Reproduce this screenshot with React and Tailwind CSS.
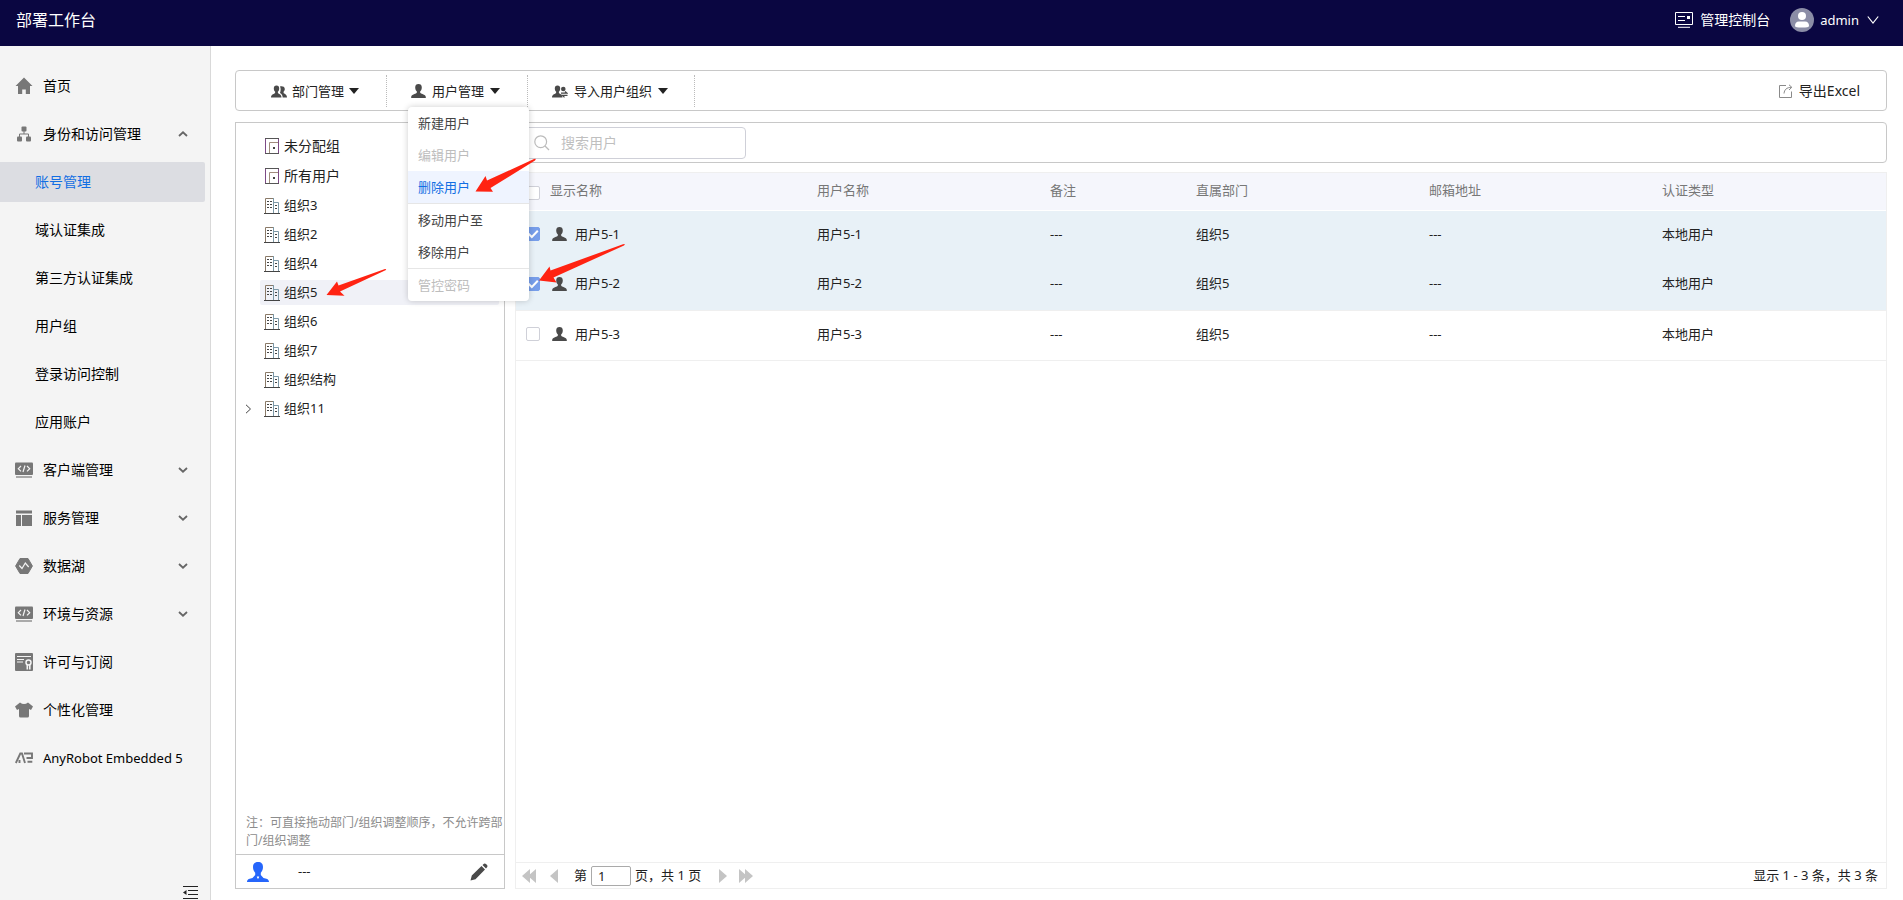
import { useState } from 'react';

const gray = '#777777';

const CodeIcon = () => (
  <svg width="18" height="16" viewBox="0 0 18 16" fill="none">
    <rect x="0" y="0.5" width="18" height="12.5" rx="1" fill={gray} />
    <path d="M6 4L3.3 6.7L6 9.4M12 4L14.7 6.7L12 9.4M10 3.5L8 10" stroke="#f4f4f4" strokeWidth="1.2" />
    <path d="M1 15H17" stroke={gray} strokeWidth="1.2" />
  </svg>
);

const icons = {
  home: (
    <svg width="18" height="18" viewBox="0 0 18 18" fill={gray}>
      <path d="M9 0.5L17.5 9H15V17H10.8V12.5H7.2V17H3V9H0.5Z" />
    </svg>
  ),
  tree: (
    <svg width="18" height="18" viewBox="0 0 18 18" fill={gray}>
      <rect x="6.5" y="1.5" width="5" height="5" rx="1" />
      <rect x="2" y="11.5" width="5" height="5" rx="1" />
      <rect x="11" y="11.5" width="5" height="5" rx="1" />
      <path d="M9 6V9M4.5 12V9H13.5V12" stroke={gray} fill="none" />
    </svg>
  ),
  code: <CodeIcon />,
  layout: (
    <svg width="18" height="18" viewBox="0 0 18 18" fill={gray}>
      <path d="M1 1.5H17V4.5H1ZM1 6H6V17H1ZM7 6H17V17H7Z" />
    </svg>
  ),
  lake: (
    <svg width="18" height="18" viewBox="0 0 18 18">
      <path d="M5 1.5H13L17.4 9L13 16.5H5L0.6 9Z" fill={gray} stroke={gray} strokeLinejoin="round" />
      <path d="M4.3 8.5L7 11.5L10.3 6L13.7 10" stroke="#f4f4f4" strokeWidth="1.2" fill="none" />
    </svg>
  ),
  license: (
    <svg width="18" height="18" viewBox="0 0 18 18" fill="none" stroke="#f4f4f4">
      <rect width="18" height="18" rx="1" fill={gray} stroke="none" />
      <path d="M2 3.5H16M2 6.5H9M2 9H8" />
      <circle cx="13.5" cy="9.5" r="2.5" strokeWidth="1.5" />
      <path d="M12.3 12V16.5M14.8 12V16.5" strokeWidth="1.6" />
    </svg>
  ),
  shirt: (
    <svg width="18" height="16" viewBox="0 0 18 16" fill={gray}>
      <path d="M5 0.5Q9 3.5 13 0.5L18 4.5L16 8L14 7V14Q14 15.5 12.5 15.5H5.5Q4 15.5 4 14V7L2 8L0 4.5Z" />
    </svg>
  ),
  robot: (
    <svg width="18" height="12" viewBox="0 0 18 12" fill="none" stroke={gray} strokeWidth="1.9">
      <path d="M0.8 11L5.3 1.5H7L10 11M9 1.5H17V6H11.5M12.5 9.8H17.3M4.5 8V11" />
    </svg>
  ),
};

const menu = [
  { name: '首页', icon: 'home' },
  { name: '身份和访问管理', icon: 'tree', arrow: 'up' },
  { name: '账号管理', sub: true, active: true },
  { name: '域认证集成', sub: true },
  { name: '第三方认证集成', sub: true },
  { name: '用户组', sub: true },
  { name: '登录访问控制', sub: true },
  { name: '应用账户', sub: true },
  { name: '客户端管理', icon: 'code', arrow: 'down' },
  { name: '服务管理', icon: 'layout', arrow: 'down' },
  { name: '数据湖', icon: 'lake', arrow: 'down' },
  { name: '环境与资源', icon: 'code', arrow: 'down' },
  { name: '许可与订阅', icon: 'license' },
  { name: '个性化管理', icon: 'shirt' },
  { name: 'AnyRobot Embedded 5', icon: 'robot', latin: true },
];

const groups = ['组织3', '组织2', '组织4', '组织5', '组织6', '组织7', '组织结构', '组织11'];

const userActions = [
  { name: '新建用户' },
  { name: '编辑用户', disabled: true },
  { name: '删除用户', active: true },
  { name: '移动用户至', line: true },
  { name: '移除用户' },
  { name: '管控密码', disabled: true, line: true },
];

const users = ['用户5-1', '用户5-2', '用户5-3'];

const Chevron = ({ up }) => (
  <svg width="10" height="6" viewBox="0 0 10 6" fill="none" stroke="#666" strokeWidth="1.8">
    <path d={up ? 'M1 5L5 1.3L9 5' : 'M1 1L5 4.7L9 1'} />
  </svg>
);

const Person = () => (
  <svg width="15" height="14" viewBox="0 0 15 14" fill="#4a4a4a">
    <path d="M7.5 0C9.6 0 10.8 1.2 10.8 3.4C10.8 5.3 10 6.6 9.2 7.3V8.8C9.2 9.7 14.8 10.2 14.8 13V14H0.2V13C0.2 10.2 5.8 9.7 5.8 8.8V7.3C5 6.6 4.2 5.3 4.2 3.4C4.2 1.2 5.4 0 7.5 0Z" />
  </svg>
);

const People = ({ sync }) => (
  <svg width="16" height="13" viewBox="0 0 16 13" fill="#4a4a4a">
    <path d="M5.5 0.5C7.4 0.5 8.2 1.6 8.2 3.4C8.2 5 7.6 6 6.9 6.6V8C7.2 8.9 10.5 9 10.5 12.5H0C0 9 3.8 8.9 4.1 8V6.6C3.4 6 2.8 5 2.8 3.4C2.8 1.6 3.6 0.5 5.5 0.5Z" />
    {sync ? (
      <>
        <circle cx="11.3" cy="4" r="2.3" />
        <path d="M9 8.2H15L13 6.4M15.5 10.4H10.5L12.5 12.4" stroke="#4a4a4a" strokeWidth="1.3" fill="none" />
      </>
    ) : (
      <path d="M9 1.6C9.6 0.9 13.8 0.7 13.8 4C13.8 5.5 13 6.3 12.6 6.8V8C12.8 8.8 16 9 16 12.5H11.7C11.6 10 10.6 9 9 8C9.8 6 10 3.6 9 1.6Z" />
    )}
  </svg>
);

const Caret = () => (
  <svg width="10" height="6" viewBox="0 0 10 6" fill="#222">
    <path d="M0 0H10L5 6Z" />
  </svg>
);

const RoomIcon = () => (
  <svg width="16" height="16" viewBox="0 0 16 16" fill="none">
    <path d="M0.5 0.5H13.5V15.5H0.5Z" stroke="#7d4a86" />
    <path d="M0 0.5H14M0 15.5H14" stroke="#555" />
    <path d="M4.5 15V4.5H13" stroke="#a08c7c" />
    <rect x="8" y="9" width="2" height="2" fill="#444" />
  </svg>
);

const OrgIcon = () => (
  <svg width="16" height="16" viewBox="0 0 16 16" fill="none">
    <path d="M1.5 15V0.5H9.5" stroke="#8a7a68" />
    <path d="M9.5 0V15M10 4.5H14.5V15" stroke="#7c99a8" />
    <path d="M0 15.5H16" stroke="#444" />
    <path d="M3 3.5H8M3 6.5H8M3 9.5H8" stroke="#444" strokeDasharray="2 1" />
    <path d="M11 7.5H13M11 10.5H13" stroke="#444" />
  </svg>
);

function Check({ checked, onChange, label }) {
  return (
    <span className="relative block size-3.5">
      <input
        type="checkbox"
        aria-label={label}
        checked={checked}
        onChange={onChange}
        className="block size-3.5 appearance-none rounded-xs border border-[#cfd0d8] bg-white checked:border-[#779eea] checked:bg-[#779eea]"
      />
      {checked && (
        <svg viewBox="0 0 14 14" className="pointer-events-none absolute inset-0 size-3.5" fill="none" stroke="#fff" strokeWidth="2">
          <path d="M2.5 6.8L5.8 10L11.8 3.8" />
        </svg>
      )}
    </span>
  );
}

function Sidebar() {
  return (
    <aside className="flex w-[211px] shrink-0 flex-col border-r border-[#d9d9d9] bg-[#f4f4f4] pt-5 text-black">
      <nav className="flex flex-col gap-2">
        {menu.map((item) => (
          <a
            key={item.name}
            href="#"
            className={`mr-[5px] flex h-10 items-center rounded-r-xs whitespace-nowrap ${item.sub ? 'pl-[35px]' : 'pl-[15px]'} ${item.active ? 'bg-[#dcdde2] text-[#126ee3]' : ''} ${item.latin ? 'text-[13px]' : ''}`}
          >
            {item.icon && <span className="mr-[10px] flex w-[18px] justify-center">{icons[item.icon]}</span>}
            {item.name}
            {item.arrow && (
              <span className="mr-[17px] ml-auto">
                <Chevron up={item.arrow === 'up'} />
              </span>
            )}
          </a>
        ))}
      </nav>
      <button aria-label="收起菜单" className="mt-auto mr-3 self-end">
        <svg width="15" height="14" viewBox="0 0 15 14" fill="none" stroke="#222" className="block">
          <path d="M0 0.5H15M5 4.5H15M5 8.5H15M0 12.5H15" />
          <path d="M0 6.5L3.5 4V9Z" fill="#222" stroke="none" />
        </svg>
      </button>
    </aside>
  );
}

function Toolbar() {
  return (
    <div className="flex h-[41px] items-center rounded-sm border border-[#c8c8c8] pt-px text-[13px]">
      <div className="flex h-8 w-[151px] items-center border-r border-dotted border-[#bbb] pl-[35px]">
        <button className="flex items-center gap-[5px]">
          <People />
          部门管理
          <Caret />
        </button>
      </div>
      <div className="relative flex h-8 w-[141px] items-center border-r border-dotted border-[#bbb] pl-6">
        <button className="flex items-center gap-1.5">
          <Person />
          用户管理
          <Caret />
        </button>
        {/* 用户管理下拉菜单 */}
        <div className="absolute top-8 left-[21px] z-10 w-[121px] rounded-sm bg-white text-[#444] shadow-[0_0_6px_rgba(0,0,0,0.2)]">
          {userActions.map((a) => (
            <button
              key={a.name}
              disabled={a.disabled}
              className={`block w-full pl-[10px] text-left leading-8 ${a.line ? 'border-t border-[#e6e6e6]' : ''} ${a.disabled ? 'text-[#bdbdbd]' : ''} ${a.active ? 'bg-[#eff4ff] text-[#126ee3]' : ''}`}
            >
              {a.name}
            </button>
          ))}
        </div>
      </div>
      <div className="flex h-8 w-[167px] items-center border-r border-dotted border-[#bbb] pl-6">
        <button className="flex items-center gap-1.5">
          <People sync />
          导入用户组织
          <Caret />
        </button>
      </div>
      <button className="mr-[26px] ml-auto flex items-center gap-1.5 text-sm">
        <svg width="14" height="14" viewBox="0 0 14 14" fill="none" stroke="#8a8a8a">
          <path d="M7 1.5H0.5V13.5H12.5V7.5" />
          <path d="M5 9.5C5.5 5.5 7.5 3.5 12.5 3.3M10 0.8L12.8 3.3L10 6" />
        </svg>
        导出Excel
      </button>
    </div>
  );
}

function TreePanel() {
  const [current, setCurrent] = useState('组织5');

  return (
    <div className="flex w-[270px] shrink-0 flex-col">
      <div className="flex flex-1 flex-col border border-b-0 border-[#c8c8c8] pt-[10px]">
        <div className="flex flex-col gap-1 pr-[5px] pl-6 text-[13px]">
          {['未分配组', '所有用户'].map((name) => (
            <button key={name} className="flex h-[26px] items-center gap-[3px] pl-[5px] text-sm">
              <RoomIcon />
              {name}
            </button>
          ))}
          {groups.map((name) => (
            <div key={name} className="relative">
              {name === '组织11' && (
                <svg width="7" height="10" viewBox="0 0 7 10" fill="none" stroke="#444" className="absolute top-2 -left-[15px]">
                  <path d="M1 0.8L5.5 5L1 9.2" />
                </svg>
              )}
              <button
                onClick={() => setCurrent(name)}
                className={`flex h-[25px] w-full items-center gap-1 rounded-xs pl-1 ${current === name ? 'bg-[#f0f1f7]' : ''}`}
              >
                <OrgIcon />
                {name}
              </button>
            </div>
          ))}
        </div>
        <p className="mt-auto mb-1 pl-[10px] text-xs leading-[18px] text-[#8c8c8c]">
          注：可直接拖动部门/组织调整顺序，不允许跨部门/组织调整
        </p>
      </div>
      <div className="flex h-[35px] items-center border border-[#c8c8c8] pr-4 pl-[11px]">
        <svg width="22" height="20" viewBox="0 0 22 20" fill="#2666fb">
          <path d="M11 0C14.5 0 16 2 16 5C16 8 14.8 9.5 13.8 10.8V13L16.5 16C19 16.5 22 17 22 20H0C0 17 3 16.5 5.5 16L8.2 13V10.8C7.2 9.5 6 8 6 5C6 2 7.5 0 11 0Z" />
          <path d="M9.8 14.5H12.2L11.6 16.5H10.4Z" fill="#fff" />
        </svg>
        <span className="ml-[29px] text-[13px]">---</span>
        <button aria-label="编辑" className="ml-auto">
          <svg width="18" height="18" viewBox="0 0 18 18" fill="#4a4a4a">
            <path d="M0.5 17.5L1.8 12.5L11.5 3L15 6.5L5.5 16.2ZM12.5 2L14 0.7Q15 0 16 1L17 2Q18 3 17.2 4L16 5.5Z" />
          </svg>
        </button>
      </div>
    </div>
  );
}

function UserTable() {
  const [checked, setChecked] = useState(['用户5-1', '用户5-2']);

  const toggle = (name) => {
    setChecked(checked.includes(name) ? checked.filter((n) => n !== name) : [...checked, name]);
  };

  return (
    <div className="flex flex-1 flex-col border border-[#efefef]">
      <table className="w-full table-fixed text-left text-[13px]">
        <colgroup>
          <col className="w-[26px]" />
          <col className="w-[267px]" />
          <col className="w-[233px]" />
          <col className="w-[146px]" />
          <col className="w-[233px]" />
          <col className="w-[233px]" />
          <col className="w-[232px]" />
        </colgroup>
        <thead>
          <tr className="h-[37px] border-b border-white bg-[#f5f6fc] text-[#777]">
            <th className="pt-1 pl-[10px]"><Check checked={false} onChange={() => setChecked(users)} label="全选" /></th>
            {['显示名称', '用户名称', '备注', '直属部门', '邮箱地址', '认证类型'].map((h) => (
              <th key={h} className="px-2 pb-0.5 font-normal">{h}</th>
            ))}
          </tr>
        </thead>
        <tbody>
          {users.map((name) => (
            <tr
              key={name}
              className={`h-[50px] ${checked.includes(name) ? 'bg-[#e8f1f7]' : 'border-y border-[#efefef]'}`}
            >
              <td className="pb-0.5 pl-[10px]">
                <Check checked={checked.includes(name)} onChange={() => toggle(name)} label={name} />
              </td>
              <td className="px-2 pb-0.5">
                <span className="flex items-center gap-2 pl-0.5">
                  <Person />
                  {name}
                </span>
              </td>
              <td className="px-2 pb-0.5">{name}</td>
              <td className="px-2 pb-0.5">---</td>
              <td className="px-2 pb-0.5">组织5</td>
              <td className="px-2 pb-0.5">---</td>
              <td className="px-2 pb-0.5">本地用户</td>
            </tr>
          ))}
        </tbody>
      </table>

      {/* 分页 */}
      <div className="mt-auto flex h-[26px] items-center border-t border-[#efefef] pr-2 pl-1.5 text-[13px]">
        <button aria-label="首页">
          <svg width="14" height="14" viewBox="0 0 14 14" fill="#c4c4c4"><path d="M8 0V14L0 7ZM14 0V14L6 7Z" /></svg>
        </button>
        <button aria-label="上一页" className="ml-3.5">
          <svg width="8" height="14" viewBox="0 0 8 14" fill="#c4c4c4"><path d="M8 0V14L0 7Z" /></svg>
        </button>
        <label htmlFor="page" className="ml-4">第</label>
        <input id="page" defaultValue="1" className="mx-1 h-5 w-10 rounded-xs border border-[#aaa] px-1.5" />
        <span>页，共 1 页</span>
        <button aria-label="下一页" className="ml-[18px]">
          <svg width="8" height="14" viewBox="0 0 8 14" fill="#c4c4c4"><path d="M0 0V14L8 7Z" /></svg>
        </button>
        <button aria-label="末页" className="ml-3">
          <svg width="14" height="14" viewBox="0 0 14 14" fill="#c4c4c4"><path d="M0 0V14L8 7ZM6 0V14L14 7Z" /></svg>
        </button>
        <span className="ml-auto">显示 1 - 3 条，共 3 条</span>
      </div>
    </div>
  );
}

// 操作步骤的红色箭头标注
function Arrows() {
  return (
    <svg width="660" height="320" viewBox="0 0 660 320" fill="#ff2312" className="pointer-events-none absolute top-0 left-0 z-20">
      <path d="M326.5 295L337 281.5L338.5 285.5L385 269Q387 269 385.5 270.3L340 291.5L344.5 295.8Z" />
      <path d="M475.5 191.5L485.5 176L487 180.5L534 159Q537 158 535 160.5L490.5 188L493 191.8Z" />
      <path d="M539 280.5L549.5 266.5L550.5 270.5L623 244.2Q626 243.5 624 245.5L553.5 277.5L556.5 282.5Z" />
    </svg>
  );
}

export default function App() {
  return (
    <div className="relative flex min-h-screen flex-col bg-white font-['Noto_Sans','Noto_Sans_CJK_SC',sans-serif] text-sm text-[#222]">
      <header className="flex h-[46px] items-center bg-[#0a0641] pr-6 pb-1.5 pl-4 text-white">
        <h1 className="text-base">部署工作台</h1>
        <a href="#" className="ml-auto flex items-center gap-[7px]">
          <svg width="18" height="16" viewBox="0 0 18 16" fill="none" stroke="#fff">
            <path d="M0.5 0.5H17.5V12.5H0.5ZM3 4.5H10M3 8.5H10M3 15.3H15" />
            <rect x="12" y="4" width="3" height="3" fill="#fff" stroke="none" />
          </svg>
          管理控制台
        </a>
        <button className="ml-5 flex items-center">
          <svg width="24" height="24" viewBox="0 0 24 24">
            <circle cx="12" cy="12" r="12" fill="#8b8da6" />
            <circle cx="12" cy="8" r="4" fill="#fff" />
            <path d="M5 18Q5 13.5 9 13.5H15Q19 13.5 19 18Q19 19.5 12 19.5Q5 19.5 5 18Z" fill="#fff" />
          </svg>
          <span className="mr-2 ml-1.5 text-[13px]">admin</span>
          <svg width="12" height="8" viewBox="0 0 12 8" fill="none" stroke="#fff" strokeWidth="1.2">
            <path d="M0.8 0.5L6 7L11.2 0.5" />
          </svg>
        </button>
      </header>

      <div className="flex flex-1">
        <Sidebar />
        <main className="flex min-w-0 flex-1 flex-col gap-[11px] pt-6 pr-4 pb-[11px] pl-6">
          <Toolbar />
          <div className="flex flex-1 gap-[10px]">
            <TreePanel />
            <div className="flex min-w-0 flex-1 flex-col gap-[9px]">
              <div className="flex h-[41px] items-center rounded-sm border border-[#c8c8c8] pl-[9px]">
                <div className="flex h-8 w-[221px] items-center gap-[11px] rounded-sm border border-[#cfd0d8] pl-2">
                  <svg width="16" height="16" viewBox="0 0 16 16" fill="none" stroke="#bbb" strokeWidth="1.2">
                    <circle cx="6.7" cy="6.7" r="5.9" />
                    <path d="M11 11L15 15" />
                  </svg>
                  <input aria-label="搜索用户" placeholder="搜索用户" className="min-w-0 flex-1 outline-none placeholder:text-[#bfbfbf]" />
                </div>
              </div>
              <UserTable />
            </div>
          </div>
        </main>
      </div>
      <Arrows />
    </div>
  );
}
